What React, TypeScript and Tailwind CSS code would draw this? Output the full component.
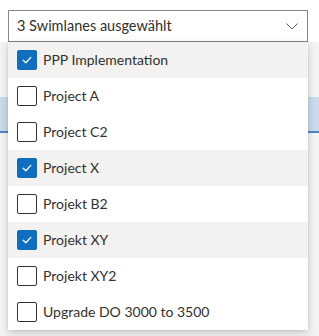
import React from "react";

const items = [
  { label: "PPP Implementation", checked: true },
  { label: "Project A", checked: false },
  { label: "Project C2", checked: false },
  { label: "Project X", checked: true },
  { label: "Projekt B2", checked: false },
  { label: "Projekt XY", checked: true },
  { label: "Projekt XY2", checked: false },
  { label: "Upgrade DO 3000 to 3500", checked: false },
];

function Check({ checked }: { checked: boolean }) {
  if (checked) {
    return (
      <div className="w-5 h-5 rounded-[2px] bg-[#106ebe] flex items-center justify-center shrink-0">
        <svg width="12" height="12" viewBox="0 0 12 12" fill="none">
          <path d="M2.2 6.3 L4.8 8.8 L9.8 3.4" stroke="white" strokeWidth="1.3" strokeLinecap="round" strokeLinejoin="round" />
        </svg>
      </div>
    );
  }
  return <div className="w-5 h-5 rounded-[2px] border border-[#323130] bg-white shrink-0" />;
}

export default function App() {
  return (
    <div className="relative w-[319px] h-[336px] overflow-hidden bg-white text-[#323130] text-[14px]" style={{ fontFamily: 'Lato, "Noto Sans", sans-serif' }}>
      <div className="h-[42px] bg-white" />
      <div className="h-[294px] bg-[#f3f3f3] flex flex-col">
        <div className="h-[55px]" />
        <div className="h-[36px] bg-[#c9dbea] border-b-2 border-[#4a86bf]" />
      </div>

      <div className="absolute left-[8px] top-[10px] w-[300px]">
        <div className="h-[32px] border border-[#8a8886] bg-white flex items-center pl-[8px] pr-[6px]">
          <span className="flex-1 leading-none text-[14.5px]">3 Swimlanes ausgewählt</span>
          <svg width="14" height="14" viewBox="0 0 14 14" fill="none" className="mr-[2px]">
            <path d="M1.5 4.5 L7 10 L12.5 4.5" stroke="#605e5c" strokeWidth="1" />
          </svg>
        </div>
        <div className="bg-white shadow-[0_3px_8px_rgba(0,0,0,0.18),0_0_2px_rgba(0,0,0,0.12)] rounded-b-[2px]">
          {items.map((it) => (
            <div key={it.label} className={`h-[36px] flex items-center pl-[9px] gap-[6px] ${it.checked ? "bg-[#f3f2f1]" : "bg-white"}`}>
              <Check checked={it.checked} />
              <span className="leading-none">{it.label}</span>
            </div>
          ))}
        </div>
      </div>
    </div>
  );
}
